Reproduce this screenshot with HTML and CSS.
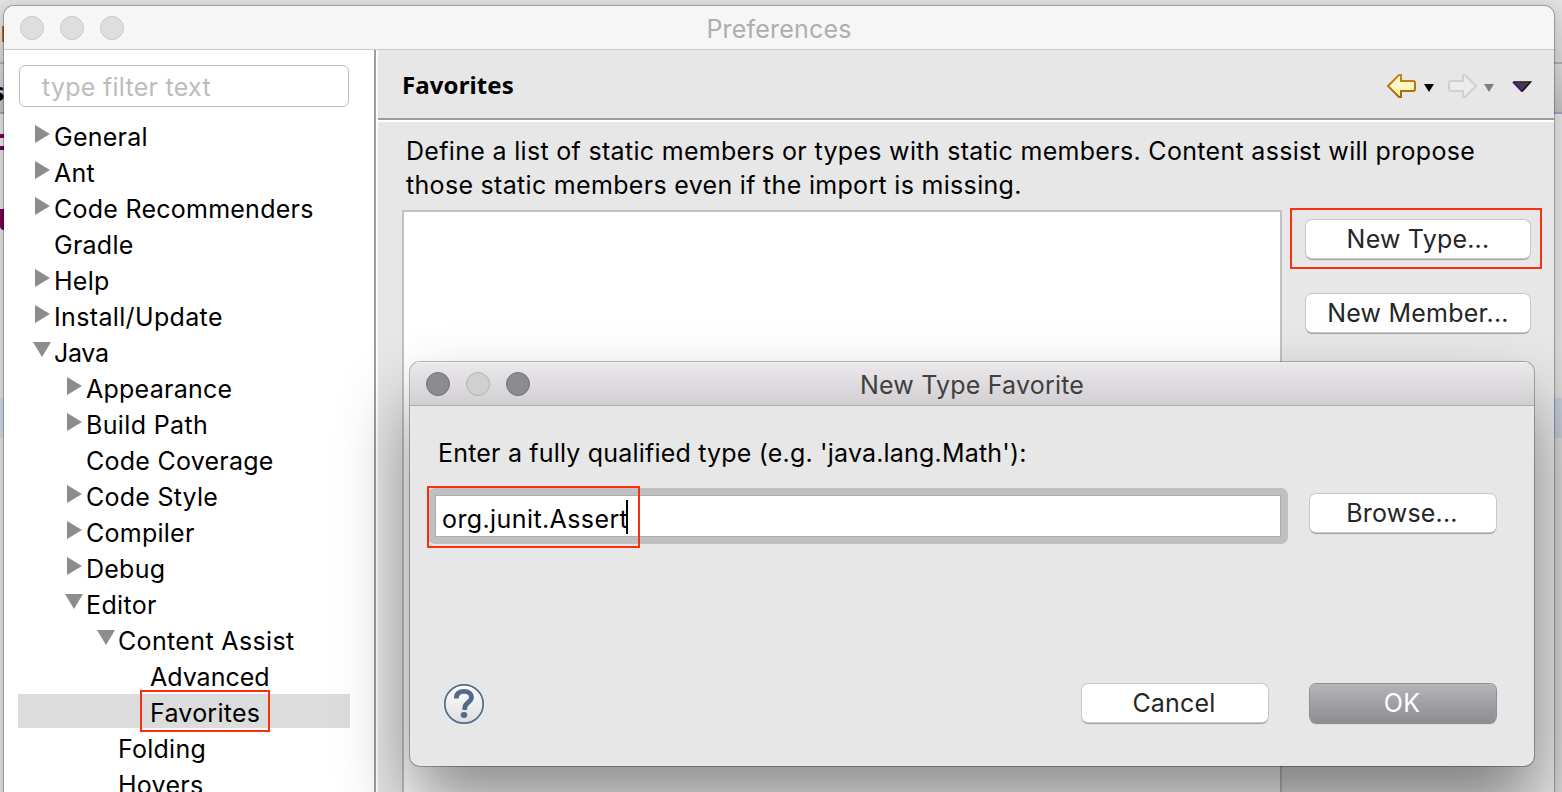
FILE: index.html
```html
<!DOCTYPE html>
<html lang="en">
<head>
<meta charset="utf-8">
<title>Preferences</title>
<link rel="stylesheet" href="styles.css">
</head>
<body>
<div class="desktop">
  <div class="backdrop">
    <div class="bd-top"></div>
    <div class="bd-tabs"></div>
    <div class="bd-edit"></div>
    <div class="bd-line"></div>
    <div class="bd-rest"></div>
  </div>
  <span class="frag frag-orange"></span>
  <span class="frag frag-s">s</span>
  <span class="frag frag-c"></span>
  <span class="frag frag-block"></span>

  <section class="window prefs">
    <header class="titlebar">
      <div class="lights"><i></i><i></i><i></i></div>
      <h1>Preferences</h1>
    </header>
    <div class="body">
      <aside class="side">
        <div class="filter">type filter text</div>
        <ul class="tree">
          <li class="row l0 closed"><span>General</span></li>
          <li class="row l0 closed"><span>Ant</span></li>
          <li class="row l0 closed"><span>Code Recommenders</span></li>
          <li class="row l0"><span>Gradle</span></li>
          <li class="row l0 closed"><span>Help</span></li>
          <li class="row l0 closed"><span class="wide">Install/Update</span></li>
          <li class="row l0 open"><span class="tight">Java</span></li>
          <li class="row l1 closed"><span>Appearance</span></li>
          <li class="row l1 closed"><span class="wide">Build Path</span></li>
          <li class="row l1"><span>Code Coverage</span></li>
          <li class="row l1 closed"><span>Code Style</span></li>
          <li class="row l1 closed"><span>Compiler</span></li>
          <li class="row l1 closed"><span>Debug</span></li>
          <li class="row l1 open"><span class="wide">Editor</span></li>
          <li class="row l2 open"><span class="wide">Content Assist</span></li>
          <li class="row l3"><span class="even">Advanced</span></li>
          <li class="row l3 selected"><span>Favorites</span><b class="mark mark-fav"></b></li>
          <li class="row l2"><span>Folding</span></li>
          <li class="row l2"><span>Hovers</span></li>
        </ul>
      </aside>
      <main class="page">
        <div class="page-head">
          <h2>Favorites</h2>
          <svg class="nav" width="150" height="30" viewBox="0 0 150 30">
            <defs>
              <linearGradient id="gold" x1="0" y1="0" x2="0" y2="1"><stop offset="0" stop-color="#fffbe8"/><stop offset="1" stop-color="#fdf0a4"/></linearGradient>
              <linearGradient id="rim" x1="0" y1="0" x2="0" y2="1"><stop offset="0" stop-color="#c98a12"/><stop offset="1" stop-color="#a86606"/></linearGradient>
            </defs>
            <path d="M3 15L14 4H16V10H28Q30 10 30 12V18Q30 20 28 20H16V26H14Z" fill="url(#gold)" stroke="url(#rim)" stroke-width="2"/>
            <path d="M39 13H49L44 21Z" fill="#000"/>
            <path d="M91 15L80 4H78V10H66Q64 10 64 12V18Q64 20 66 20H78V26H80Z" fill="#ececec" stroke="#d0d0d0" stroke-width="2"/>
            <path d="M99 13H109L104 21Z" fill="#808080"/>
            <path d="M128.500 11.500H145.500L137 20.500Z" fill="#46384f"/>
            <path d="M128 10.800L137 20.500" stroke="#42108c" stroke-width="1.800"/>
            <path d="M128.500 11H145.500L137 20.500" fill="none" stroke="#111" stroke-width="1.500"/>
          </svg>
        </div>
        <p class="desc">Define a list of static members or types with static members. Content assist will propose<br>those static members even if the import is missing.</p>
        <div class="cols">
          <div class="list"></div>
          <div class="actions">
            <button class="btn">New Type...</button>
            <button class="btn">New Member...</button>
            <b class="mark mark-new"></b>
          </div>
        </div>
      </main>
    </div>
  </section>

  <section class="window dialog">
    <header class="titlebar">
      <div class="lights"><i class="on"></i><i></i><i class="on"></i></div>
      <h1>New Type Favorite</h1>
    </header>
    <div class="dialog-body">
      <label class="prompt">Enter a fully qualified type (e.g. 'java.lang.Math'):</label>
      <div class="entry">
        <div class="field">org.junit.Assert<i class="caret"></i><b class="mark mark-field"></b></div>
        <button class="btn">Browse...</button>
      </div>
      <footer class="foot">
        <svg class="help" width="42" height="42" viewBox="0 0 42 42">
          <defs><linearGradient id="hg" x1="0" y1="0" x2="0" y2="1"><stop offset="0" stop-color="#fff"/><stop offset="1" stop-color="#dedede"/></linearGradient></defs>
          <circle cx="21" cy="21" r="19.200" fill="url(#hg)" stroke="#536a8c" stroke-width="1.700"/>
          <path d="M13.300 15.500C13.300 10.500 16 8.300 21 8.300C26 8.300 28.500 10.800 28.500 14.300C28.500 19.500 21.800 19.300 21.800 25V27" fill="none" stroke="#536a8c" stroke-width="4.800"/>
          <ellipse cx="21" cy="32" rx="3.300" ry="2.900" fill="#536a8c"/>
        </svg>
        <button class="btn">Cancel</button>
        <button class="btn ok">OK</button>
      </footer>
    </div>
  </section>
</div>
</body>
</html>
```
FILE: styles.css
```css
* { box-sizing: border-box; }
html, body { margin: 0; height: 100%; overflow: hidden; }
body { font-family: Inter, "Noto Sans", sans-serif; font-size: 25px; color: #000; }
h1, h2, p, ul { margin: 0; padding: 0; font-weight: 400; }
.desktop { position: relative; width: 1562px; height: 792px; overflow: hidden; }

/* Editor visible behind the windows */
.backdrop { display: flex; flex-direction: column; height: 100%; background: #dcdcdc; }
.bd-top { height: 62px; background: linear-gradient(#e2e2e2, #cfcfcf); }
.bd-tabs { height: 50px; background: linear-gradient(#d2d2d2, #bababa); border-top: 2px solid #a9a9a5; }
.bd-edit { height: 2px; background: #9b9db3; }
.bd-line { height: 40px; margin-top: 284px; background: #c6d0de; }
.bd-rest { flex: 1; }
.frag { position: absolute; left: 0; overflow: hidden; }
.frag-orange { left: 2px; top: 26px; width: 3px; height: 16px; background: #b4690e; }
.frag-s { left: -8px; top: 74px; height: 34px; font: bold 25px/34px "Open Sans", sans-serif; }
.frag-c { left: -4px; top: 134px; width: 12px; height: 16px; border: 4px solid #75004f; border-radius: 4px; background: #dfe3ea; }
.frag-block { top: 209px; width: 4px; height: 21px; background: #75004f; border-radius: 0 0 0 4px; }

.window { position: absolute; overflow: hidden; display: flex; flex-direction: column; background: #e7e7e7; }
.titlebar { position: relative; display: flex; align-items: center; flex: none; }
.titlebar h1 { flex: 1; padding-top: 2px; text-align: center; font-size: 25px; line-height: 30px; letter-spacing: .2px; }
.lights { position: absolute; left: 16px; display: flex; gap: 16px; }
.lights i { width: 24px; height: 24px; border-radius: 50%; background: #dedede; border: 1px solid #c8c8c8; }

.prefs { left: 4px; top: 6px; width: 1550px; height: 800px; border-radius: 10px 10px 0 0; box-shadow: 0 0 0 1px rgba(0,0,0,.25), 0 0 16px rgba(0,0,0,.15); }
.prefs .titlebar { height: 44px; background: #f6f6f6; border-bottom: 1px solid #cbcbcb; color: #aeaeae; }
.body { flex: 1; display: flex; min-height: 0; }
.side { width: 374px; padding: 15px 0 0 14px; background: #fff; border-right: 2px solid #fff; box-shadow: inset -2px 0 #9d9d9d; }
.filter { width: 330px; height: 42px; margin-left: 1px; padding: 0 22px; border: 1px solid #bfbfbf; border-radius: 6px; line-height: 42px; letter-spacing: .27px; color: #bcbcbc; }
.tree { list-style: none; margin-top: 10px; width: 332px; letter-spacing: .25px; }
.row { position: relative; height: 36px; border: solid transparent; border-width: 1px 0; background-clip: padding-box; line-height: 38px; white-space: nowrap; }
.tight { letter-spacing: -.3px; }
.even { letter-spacing: 0; }
.wide { letter-spacing: .35px; }
.l0 { padding-left: 36px; }
.l1 { padding-left: 68px; }
.l2 { padding-left: 100px; }
.l3 { padding-left: 132px; }
.closed::before, .open::before { content: ""; position: absolute; background: #8c8c8c; }
.closed::before { width: 15px; height: 18px; top: 7px; margin-left: -19px; clip-path: polygon(0 0, 100% 50%, 0 100%); }
.open::before { width: 18px; height: 15px; top: 8px; margin-left: -21px; clip-path: polygon(0 0, 100% 0, 50% 100%); }
.selected { background-color: #dcdcdc; }

.mark { position: absolute; border: 2px solid #fb2e0d; }
.mark-fav { left: 122px; top: -4px; width: 130px; height: 42px; }

.page { flex: 1; min-width: 0; display: flex; flex-direction: column; }
.page-head { display: flex; justify-content: space-between; align-items: center; height: 72px; padding: 0 19px 0 24px; border-bottom: 2px solid #fff; box-shadow: inset 0 -2px #9d9d9d; }
.page-head h2 { font: bold 24px/30px "Noto Sans", sans-serif; letter-spacing: .1px; }
.nav { margin-top: 2px; }
.desc { padding: 12px 0 0 28px; line-height: 34px; white-space: nowrap; letter-spacing: .31px; }
.cols { display: flex; gap: 24px; flex: 1; margin-top: 8px; padding-left: 24px; }
.list { width: 880px; background: #fff; border: 2px solid #c1c1c1; }
.actions { position: relative; display: flex; flex-direction: column; gap: 36px; padding-top: 10px; width: 224px; }
.btn { height: 38px; padding: 0 2px 0 0; border: 0; border-radius: 6px; background: #fff; color: #262626; font: 25px/38px Inter, sans-serif; letter-spacing: .2px; text-align: center; box-shadow: 0 0 0 1px #c8c8c8, 0 1.500px 1px #9f9f9f; white-space: nowrap; }
.actions .btn { padding-right: 0; }
.mark-new { left: -16px; top: -2px; width: 252px; height: 61px; }

.dialog { left: 410px; top: 362px; width: 1124px; height: 404px; border-radius: 10px; box-shadow: 0 0 0 1px rgba(0,0,0,.28), 0 40px 70px rgba(0,0,0,.45); }
.dialog .titlebar { height: 44px; background: linear-gradient(#ebe9eb, #d1cfd1); border-bottom: 1px solid #afadaf; box-shadow: inset 0 1px #f4f3f4; color: #404040; }
.dialog .lights i { background: #d0d0d0; border-color: #b2b2b2; }
.dialog .lights .on { background: #8c8b90; border-color: #737277; }
.dialog-body { padding: 30px 38px 0 18px; display: flex; flex-direction: column; }
.prompt { padding-left: 10px; line-height: 34px; white-space: nowrap; letter-spacing: .19px; }
.entry { display: flex; align-items: flex-start; justify-content: space-between; margin-top: 18px; }
.field { position: relative; width: 860px; height: 56px; border: 7px solid #c0c0c2; border-radius: 7px; background: #fff; box-shadow: inset 0 0 0 1px #adadad; padding-left: 7px; line-height: 48px; letter-spacing: .4px; white-space: nowrap; }
.entry .btn { width: 186px; margin-top: 6px; }
.caret { position: absolute; left: 191px; top: 5px; width: 2px; height: 34px; background: #000; }
.mark-field { left: -8px; top: -9px; width: 213px; height: 62px; }
.foot { display: flex; align-items: center; margin-top: 139px; padding-left: 15px; }
.help { margin-right: auto; }
.foot .btn { width: 186px; margin: 0 42px 2px 0; }
.foot .ok { margin-right: 0; background: linear-gradient(#b5b4b9, #8e8d92); color: #fff; box-shadow: 0 0 0 1px #8f8e93, 0 1.500px 1px #858489; }
```
